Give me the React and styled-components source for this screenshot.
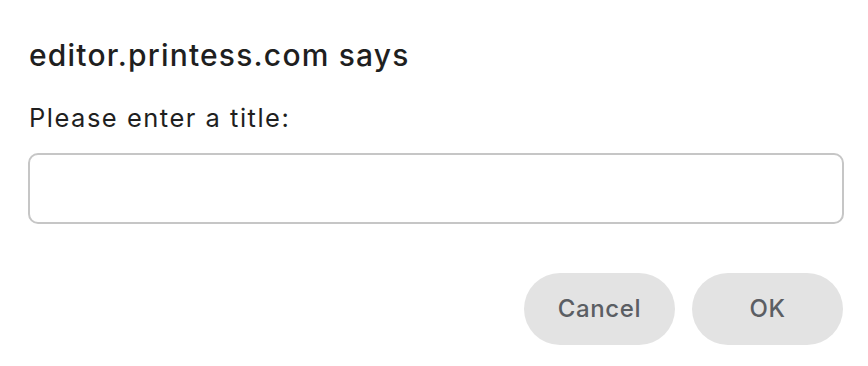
import React from "react";
import styled, { createGlobalStyle } from "styled-components";

const Global = createGlobalStyle`
  html, body { margin: 0; padding: 0; background: #ffffff; }
  body { font-family: Inter, "Noto Sans", "Liberation Sans", sans-serif; }
`;

const Dialog = styled.div`
  width: 868px;
  height: 366px;
  box-sizing: border-box;
  padding: 37px 24px 0 28px;
  display: flex;
  flex-direction: column;
  background: #ffffff;
`;

const Title = styled.h1`
  margin: 0;
  font-size: 30px;
  line-height: 36px;
  font-weight: 500;
  color: #1f1f1f;
  letter-spacing: 1.2px;
  padding-left: 1px;
`;

const Message = styled.p`
  margin: 29.5px 0 0;
  font-size: 25.5px;
  line-height: 30px;
  font-weight: 400;
  color: #1f1f1f;
  letter-spacing: 1.5px;
  padding-left: 1px;
`;

const Field = styled.input`
  margin: 20px 0 0;
  height: 71px;
  width: 816px;
  box-sizing: border-box;
  border: 2px solid #c6c6c6;
  border-radius: 10px;
  background: #ffffff;
  outline: none;
  font-family: inherit;
  font-size: 22px;
  padding: 0 16px;
`;

const Actions = styled.div`
  display: flex;
  justify-content: flex-end;
  gap: 17px;
  width: 815px;
  margin-top: 49px;
`;

const Button = styled.button`
  width: 151px;
  height: 72px;
  border: none;
  border-radius: 36px;
  background: #e3e3e3;
  color: #5b5e63;
  font-family: inherit;
  font-size: 24px;
  font-weight: 500;
  letter-spacing: 0.6px;
  cursor: pointer;
`;

export default function App() {
  return (
    <>
      <Global />
      <Dialog>
        <Title>editor.printess.com says</Title>
        <Message>Please enter a title:</Message>
        <Field type="text" />
        <Actions>
          <Button>Cancel</Button>
          <Button>OK</Button>
        </Actions>
      </Dialog>
    </>
  );
}
